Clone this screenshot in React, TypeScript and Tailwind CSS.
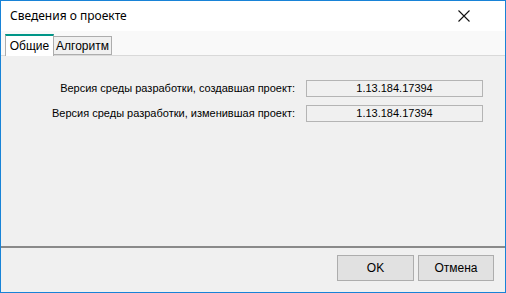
import React from "react";

const Field = ({ label, value }: { label: string; value: string }) => (
  <div className="flex items-center h-[17px]">
    <span className="w-[301px] pr-[7px] text-right">{label}</span>
    <div className="ml-[4px] w-[177px] h-[17px] border border-[#b4b4b4] bg-[#f0f0f0] flex items-center justify-center">
      {value}
    </div>
  </div>
);

export default function App() {
  return (
    <div
      className="w-[506px] h-[293px] border border-[#1883d7] flex flex-col bg-[#f0f0f0] text-black overflow-hidden"
      style={{ fontFamily: '"Liberation Sans", Arial, sans-serif' }}
    >
      <div className="h-[30px] bg-white flex items-center justify-between pl-[9px] pr-[35px]">
        <span className="text-[12px]" style={{ fontFamily: '"Noto Sans", sans-serif' }}>
          Сведения о проекте
        </span>
        <svg width="12" height="12" viewBox="0 0 12 12">
          <path d="M0.5 0.5 L11.5 11.5 M11.5 0.5 L0.5 11.5" stroke="#111" strokeWidth="1.1" />
        </svg>
      </div>
      <div className="h-[25px] bg-[#f9f9f9] flex items-end pl-[4px] border-b border-[#d9d9d9] text-[12px]">
        <div className="w-[49px] h-[22px] bg-white border-t-2 border-t-[#009688] border-l border-r border-[#adadad] flex items-center justify-center mb-[-1px] relative z-10">
          Общие
        </div>
        <div className="w-[58px] h-[19px] bg-[#f0f0f0] border border-[#adadad] border-l-0 flex items-center justify-center">
          Алгоритм
        </div>
      </div>
      <div className="flex-1 border-b-2 border-[#8a8a8a] pt-[24px] flex flex-col gap-[8px] text-[11px]">
        <Field label="Версия среды разработки, создавшая проект:" value="1.13.184.17394" />
        <Field label="Версия среды разработки, изменившая проект:" value="1.13.184.17394" />
      </div>
      <div className="h-[44px] flex items-start justify-end gap-[4px] pt-[7px] pr-[11px] text-[12px]">
        <button className="w-[77px] h-[26px] bg-[#e1e1e1] border border-[#adadad]">OK</button>
        <button className="w-[76px] h-[26px] bg-[#e1e1e1] border border-[#adadad]">Отмена</button>
      </div>
    </div>
  );
}
